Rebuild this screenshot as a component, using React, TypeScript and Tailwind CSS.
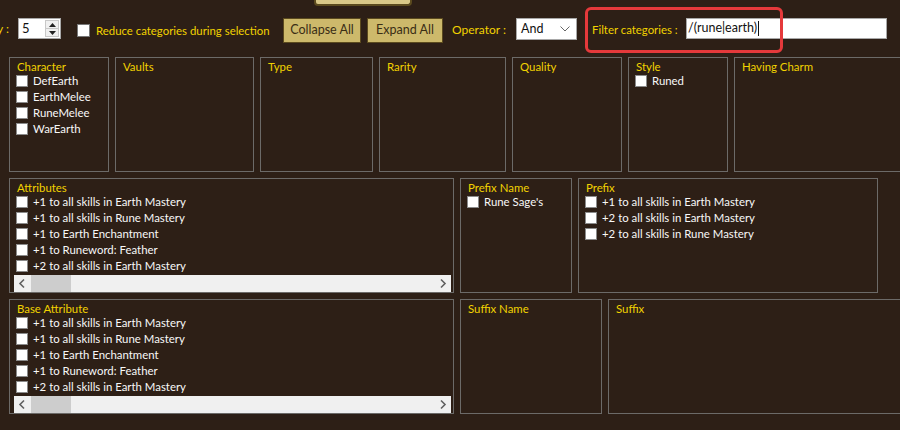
import React from "react";

const Check = () => (
  <span className="inline-block w-[12px] h-[12px] bg-white border border-[#8a8a8a] shrink-0" />
);

function Item({ label }: { label: string }) {
  return (
    <div className="flex items-center h-[16px] whitespace-nowrap">
      <Check />
      <span className="ml-[5px] text-[#f8f8f8]">{label}</span>
    </div>
  );
}

function Panel({
  title,
  items = [],
  className,
  scroll = false,
}: {
  title: string;
  items?: string[];
  className: string;
  scroll?: boolean;
}) {
  return (
    <div className={"shrink-0 h-[115px] border border-[#6c6a68] overflow-hidden " + className}>
      <div className="pt-[2px] pl-[6px] pr-[3px]">
        <div className="h-[13px] leading-[13px] pl-[1px] text-[#f2d200] whitespace-nowrap">{title}</div>
        {items.map((it) => (
          <Item key={it} label={it} />
        ))}
      </div>
      {scroll && (
        <div className="ml-[4px] mr-[2px] mt-[1px] h-[17px] bg-[#f0f0f0] flex items-center relative">
          <svg width="17" height="17" viewBox="0 0 17 17" className="shrink-0">
            <path d="M10 4.5 L6 8.5 L10 12.5" stroke="#606060" strokeWidth="1.6" fill="none" />
          </svg>
          <div className="w-[40px] h-[17px] bg-[#cdcdcd]" />
          <div className="flex-1" />
          <svg width="17" height="17" viewBox="0 0 17 17" className="shrink-0">
            <path d="M7 4.5 L11 8.5 L7 12.5" stroke="#606060" strokeWidth="1.6" fill="none" />
          </svg>
        </div>
      )}
    </div>
  );
}

const attrs = [
  "+1 to all skills in Earth Mastery",
  "+1 to all skills in Rune Mastery",
  "+1 to Earth Enchantment",
  "+1 to Runeword: Feather",
  "+2 to all skills in Earth Mastery",
];

export default function App() {
  return (
    <div
      className="w-[900px] h-[430px] bg-[#2d1f16] overflow-hidden relative text-[11.4px]"
      style={{ fontFamily: "Lato, 'Open Sans', sans-serif" }}
    >
      {/* partial button at top */}
      <div className="h-[6px] flex">
        <div className="ml-[314px] w-[98px] h-[6px] bg-[#d9c888] border-x-2 border-b-2 border-[#5b4a1e] rounded-b-[4px]" />
      </div>

      {/* controls */}
      <div className="mt-[12px] h-[25px] flex items-start whitespace-nowrap">
        <span className="w-[18px] shrink-0 h-[21px] leading-[21px] text-[#f2d200] text-[12px] overflow-hidden">
          <span className="ml-[-3px]">y :</span>
        </span>
        <div className="w-[43px] h-[21px] bg-white border border-[#a8a8a8] flex items-center shrink-0">
          <span className="ml-[3px] text-[13px] text-[#111] flex-1">5</span>
          <div className="w-[14px] h-[17px] mr-[1px] flex flex-col border border-[#c8c8c8] bg-[#f0f0f0]">
            <div className="flex-1 flex items-center justify-center border-b border-[#c8c8c8]">
              <svg width="7" height="4" viewBox="0 0 7 4"><path d="M0 4 L3.5 0 L7 4Z" fill="#222" /></svg>
            </div>
            <div className="flex-1 flex items-center justify-center">
              <svg width="7" height="4" viewBox="0 0 7 4"><path d="M0 0 L3.5 4 L7 0Z" fill="#222" /></svg>
            </div>
          </div>
        </div>
        <span className="ml-[16px] mt-[6px] inline-block w-[13px] h-[13px] bg-white border border-[#777] shrink-0" />
        <span className="ml-[6px] w-[172px] shrink-0 h-[25px] leading-[25px] text-[#f2d200]">
          Reduce categories during selection
        </span>
        <div className="ml-[15px] w-[78px] shrink-0 h-[25px] bg-[#cdb96b] border border-[#5b4a1e] flex items-center justify-center text-[12.5px] text-[#3a2d15]">
          Collapse All
        </div>
        <div className="ml-[6px] w-[76px] shrink-0 h-[25px] bg-[#cdb96b] border border-[#5b4a1e] flex items-center justify-center text-[12.5px] text-[#3a2d15]">
          Expand All
        </div>
        <span className="ml-[9px] w-[55px] shrink-0 h-[23px] leading-[23px] text-[#f2d200] text-[12px]">Operator :</span>
        <div className="ml-[9px] w-[61px] shrink-0 h-[22px] bg-white border border-[#a8a8a8] flex items-center">
          <span className="ml-[4px] text-[12.5px] text-[#111] flex-1">And</span>
          <svg width="10" height="6" viewBox="0 0 10 6" className="mr-[6px]">
            <path d="M0.5 0.5 L5 5 L9.5 0.5" stroke="#666" strokeWidth="1" fill="none" />
          </svg>
        </div>
        <span className="ml-[15px] w-[84px] shrink-0 h-[23px] leading-[23px] text-[#f2d200]">Filter categories :</span>
        <div className="ml-[10px] w-[201px] shrink-0 h-[21px] bg-white border border-[#a8a8a8] flex items-center">
          <span className="ml-[1px] text-[12.5px] text-[#111]">/(rune|earth)</span>
          <span className="w-[1px] h-[15px] bg-[#111] ml-[1px]" />
        </div>
      </div>

      {/* red annotation */}
      <div className="absolute left-[585px] top-[7px] w-[198px] h-[46px] border-[3px] border-[#e5393b] rounded-[6px]" />

      {/* row 1 */}
      <div className="mt-[14px] flex">
        <Panel className="ml-[9px] w-[100px]" title="Character" items={["DefEarth", "EarthMelee", "RuneMelee", "WarEarth"]} />
        <Panel className="ml-[6px] w-[139px]" title="Vaults" />
        <Panel className="ml-[6px] w-[113px]" title="Type" />
        <Panel className="ml-[6px] w-[127px]" title="Rarity" />
        <Panel className="ml-[6px] w-[110px]" title="Quality" />
        <Panel className="ml-[6px] w-[100px]" title="Style" items={["Runed"]} />
        <Panel className="ml-[6px] w-[200px]" title="Having Charm" />
      </div>

      {/* row 2 */}
      <div className="mt-[6px] flex">
        <Panel className="ml-[9px] w-[445px]" title="Attributes" items={attrs} scroll />
        <Panel className="ml-[6px] w-[112px]" title="Prefix Name" items={["Rune Sage's"]} />
        <Panel
          className="ml-[6px] w-[300px]"
          title="Prefix"
          items={[
            "+1 to all skills in Earth Mastery",
            "+2 to all skills in Earth Mastery",
            "+2 to all skills in Rune Mastery",
          ]}
        />
      </div>

      {/* row 3 */}
      <div className="mt-[6px] flex">
        <Panel className="ml-[9px] w-[445px]" title="Base Attribute" items={attrs} scroll />
        <Panel className="ml-[6px] w-[142px]" title="Suffix Name" />
        <Panel className="ml-[6px] w-[300px]" title="Suffix" />
      </div>
    </div>
  );
}
